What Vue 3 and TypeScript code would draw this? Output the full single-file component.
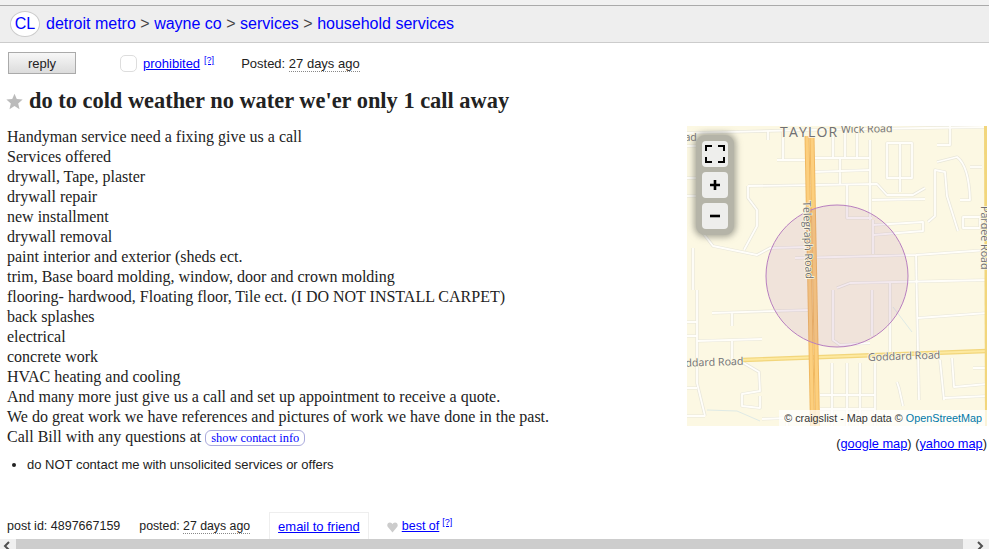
<template>
  <div class="page">
    <div class="top-strip"></div>
    <header class="crumbs">
      <a class="cl-logo" href="#">CL</a>
      <template v-for="(crumb, i) in crumbs" :key="crumb">
        <span v-if="i > 0" class="sep">&gt;</span>
        <a href="#">{{ crumb }}</a>
      </template>
    </header>

    <section class="actions">
      <button class="reply">reply</button>
      <span class="flag-box"></span>
      <a class="prohibited" href="#">prohibited</a>
      <sup class="help">[?]</sup>
      <span class="posted">Posted: <time>27 days ago</time></span>
    </section>

    <h1 class="title">
      <svg class="star" width="17" height="17" viewBox="0 0 24 24">
        <path fill="#bbb" d="M12 1l3.2 7.600 8.300.7-6.300 5.400 1.900 8.100-7.100-4.300-7.100 4.300 1.900-8.100L.5 9.300l8.300-.7z" />
      </svg>
      do to cold weather no water we'er only 1 call away
    </h1>

    <main class="content">
      <div class="body-col">
        <div class="body-text">
          <div v-for="line in bodyLines" :key="line">{{ line }}</div>
          <div>Call Bill with any questions at <a class="contact" href="#">show contact info</a></div>
        </div>
        <ul class="notices">
          <li>do NOT contact me with unsolicited services or offers</li>
        </ul>
      </div>

      <aside class="map-col">
        <div class="map">
          <svg width="300" height="300" viewBox="0 0 300 300">
            <rect width="300" height="300" fill="#fcf8e3" />
            <path d="M206 181L225 206M20 284L50 285L73 295" fill="none" stroke="#dfeae6" stroke-width="1" />
            <g fill="none" stroke-linejoin="round">
              <path v-for="s in streets" :key="'c' + s" :d="s" stroke="#e8e6da" stroke-width="3.2" />
              <path v-for="s in streets" :key="'f' + s" :d="s" stroke="#fffefa" stroke-width="1.8" />
              <!-- goddard and the road on the right edge -->
              <path d="M55 234L300 225" stroke="#f2d67c" stroke-width="4.4" />
              <path d="M55 234L300 225" stroke="#fde9a0" stroke-width="2.2" />
              <path d="M299 0L300 300" stroke="#f2d67c" stroke-width="4" />
              <!-- telegraph -->
              <path d="M120 10L125.500 300" stroke="#f0b860" stroke-width="5" />
              <path d="M125 10L130.500 300" stroke="#f0b860" stroke-width="5" />
              <path d="M120 10L125.500 300" stroke="#fccf7e" stroke-width="3" />
              <path d="M125 10L130.500 300" stroke="#fccf7e" stroke-width="3" />
            </g>
            <circle cx="150" cy="150" r="71" fill="#a0509f" fill-opacity="0.12" stroke="#b87fc0" stroke-width="1" />
            <g class="labels">
              <text x="93" y="11" class="town">TAYLOR</text>
              <text x="154" y="7" transform="rotate(-1 154 7)">Wick Road</text>
              <text x="-9" y="15">oad</text>
              <text x="116" y="75" transform="rotate(88 116 75)">Telegraph Road</text>
              <text x="294" y="80" transform="rotate(90 294 80)">Pardee Road</text>
              <text x="-8" y="241" transform="rotate(-2 -8 241)">oddard Road</text>
              <text x="181" y="235" transform="rotate(-2 181 235)">Goddard Road</text>
            </g>
          </svg>
          <div class="zoom-panel">
            <button class="zoom-btn">
              <svg width="20" height="18" viewBox="0 0 20 18">
                <path d="M1 6V1h6M13 1h6v5M19 12v5h-6M7 17H1v-5" fill="none" stroke="#000" stroke-width="2" />
              </svg>
            </button>
            <button class="zoom-btn">
              <svg width="10" height="10" viewBox="0 0 10 10"><path d="M5 0v10M0 5h10" stroke="#000" stroke-width="2.600" /></svg>
            </button>
            <button class="zoom-btn">
              <svg width="10" height="10" viewBox="0 0 10 10"><path d="M0 5h10" stroke="#000" stroke-width="2.600" /></svg>
            </button>
          </div>
          <div class="attribution">© craigslist - Map data © <a href="#">OpenStreetMap</a></div>
        </div>
        <div class="map-links">(<a href="#">google map</a>) (<a href="#">yahoo map</a>)</div>
      </aside>
    </main>

    <footer class="post-footer">
      <span class="post-id">post id: 4897667159</span>
      <span class="post-date">posted: <time>27 days ago</time></span>
      <a class="email" href="#">email to friend</a>
      <svg class="heart" width="11" height="11" viewBox="0 0 24 24">
        <path fill="#ccc" d="M12 23L2 11C-1 7 1 1 6.500 1 9 1 11 2.500 12 5c1-2.500 3-4 5.500-4C23 1 25 7 22 11z" />
      </svg>
      <a class="best" href="#">best of</a>
      <sup class="help">[?]</sup>
    </footer>

    <div class="scrollbar">
      <span class="arrow">
        <svg width="8" height="10" viewBox="0 0 8 10"><path d="M6 1L2 5l4 4" fill="none" stroke="#505050" stroke-width="2" /></svg>
      </span>
      <span class="thumb"></span>
      <span class="arrow right">
        <svg width="8" height="10" viewBox="0 0 8 10"><path d="M2 1l4 4-4 4" fill="none" stroke="#505050" stroke-width="2" /></svg>
      </span>
    </div>
  </div>
</template>

<script setup lang="ts">
const crumbs: string[] = ["detroit metro", "wayne co", "services", "household services"];

const bodyLines: string[] = [
  "Handyman service need a fixing give us a call",
  "Services offered",
  "drywall, Tape, plaster",
  "drywall repair",
  "new installment",
  "drywall removal",
  "paint interior and exterior (sheds ect.",
  "trim, Base board molding, window, door and crown molding",
  "flooring- hardwood, Floating floor, Tile ect. (I DO NOT INSTALL CARPET)",
  "back splashes",
  "electrical",
  "concrete work",
  "HVAC heating and cooling",
  "And many more just give us a call and set up appointment to receive a quote.",
  "We do great work we have references and pictures of work we have done in the past.",
];

// street centre lines, traced in map coordinates
const streets: string[] = [
  "M0 7L118 4L300 1",
  "M81 5V14",
  "M90 34H118M96 6V35",
  "M126 32H183M146 2V32M158 2V32M170 2V32",
  "M183 14V94",
  "M126 46L183 44M153 32V59",
  "M61 60L190 58L200 69H226L238 62",
  "M185 74L238 73",
  "M160 59V92H185",
  "M200 17H225V52H200ZM213 17V66",
  "M263 0V19H250",
  "M271 105L260 70L258 46L248 44V90L241 96",
  "M250 36L270 31Q282 40 283 74H273",
  "M283 41H295",
  "M276 91H293V102H276Z",
  "M61 60V72L70 84V100L57 124",
  "M16 107L26 120L70 129L83 122L120 121",
  "M108 132L229 129L300 124",
  "M186 94V128M186 109L236 105V96L186 99",
  "M229 129L232 274",
  "M6 122V164",
  "M0 20H16M0 52H16V107M0 70H16",
  "M150 162L163 157L300 154",
  "M146 164V214L153 219L183 217",
  "M185 164V210M203 157V227",
  "M25 187L123 184M45 187V200",
  "M10 164V257L18 290M0 196H10M0 210H10",
  "M10 215L75 213M45 215V234",
  "M145 237V300M160 237V300M173 237V300M188 237V300M133 269H188M133 283H188",
  "M231 192L300 187",
  "M253 234L257 274M265 232L267 261L300 258M257 272L300 270M286 242H300",
  "M55 236L72 246L73 265L55 268V280L73 282V270",
  "M210 256L212 262L216 280",
  "M75 293L100 292V300",
  "M0 262H10M0 290H18",
];
</script>

<style>
html,
body {
  margin: 0;
  overflow: hidden;
}
</style>

<style scoped>
.page {
  height: 549px;
  display: flex;
  flex-direction: column;
  overflow: hidden;
  background: #fff;
  color: #222;
  font-family: "Liberation Sans", Arial, sans-serif;
  font-size: 13px;
}

a {
  color: #00f;
}

.top-strip {
  height: 5px;
  background: #f1f1f1;
  border-bottom: 1px solid #aaa;
  flex: none;
}

.crumbs {
  flex: none;
  height: 37px;
  box-sizing: border-box;
  display: flex;
  align-items: center;
  gap: 4.500px;
  padding: 0 0 0 10px;
  background: #eee;
  border-bottom: 1px solid #ccc;
  font-size: 16px;
}

.crumbs a {
  text-decoration: none;
}

.crumbs .cl-logo {
  width: 28px;
  height: 24px;
  margin-right: 1.500px;
  border: 1px solid #ccc;
  border-radius: 50%;
  background: #fff;
  display: flex;
  align-items: center;
  justify-content: center;
}

.sep {
  color: #444;
}

.actions {
  flex: none;
  display: flex;
  align-items: center;
  height: 22px;
  margin: 9px 0 0 8px;
}

.reply {
  width: 68px;
  height: 22px;
  padding: 0;
  border: 1px solid #aaa;
  background: linear-gradient(#f7f7f7, #dcdcdc);
  color: #222;
  font: 13px "Liberation Sans", Arial, sans-serif;
}

.flag-box {
  width: 15px;
  height: 15px;
  margin-left: 44px;
  border: 1px solid #ddd;
  border-radius: 5px;
}

.prohibited {
  margin-left: 6px;
}

.help {
  font-size: 9px;
  margin-left: 4px;
  color: #00f;
  text-decoration: underline;
  align-self: flex-start;
  line-height: 16px;
}

.posted {
  margin-left: 27px;
}

time {
  border-bottom: 1px dotted #888;
}

.title {
  flex: none;
  margin: 14px 0 0 7px;
  display: flex;
  align-items: center;
  gap: 5px;
  height: 26px;
  color: #222;
  font: bold 22.400px "Liberation Serif", "Times New Roman", serif;
}

.star {
  margin-left: -1px;
  margin-right: 1px;
}

.content {
  flex: 1;
  display: flex;
  justify-content: space-between;
  padding: 12px 2px 0 7px;
  min-height: 0;
}

.body-text {
  margin-top: 1px;
  font: 16px/20px "Liberation Serif", "Times New Roman", serif;
}

.contact {
  padding: 0 5px;
  border: 1px solid #aad;
  border-radius: 6px;
  font-size: 12.400px;
  text-decoration: none;
}

.notices {
  margin: 9px 0 0;
  padding: 0 0 0 20px;
  font-size: 13px;
}

.map {
  position: relative;
  width: 300px;
  height: 300px;
  overflow: hidden;
}

.map > svg {
  display: block;
}

.labels text {
  fill: #6f6f74;
  font: 10.700px "Open Sans", sans-serif;
  paint-order: stroke;
  stroke: #fcf8e3;
  stroke-width: 1.500px;
}

.labels .town {
  font-size: 14px;
  letter-spacing: 1.200px;
}

.zoom-panel {
  position: absolute;
  left: 9px;
  top: 9px;
  padding: 6px;
  display: flex;
  flex-direction: column;
  gap: 5px;
  border-radius: 9px;
  background: #b5b4a8;
  box-shadow: 0 0 6px 2px rgba(130, 130, 120, 0.7);
}

.zoom-btn {
  width: 26px;
  height: 26px;
  padding: 0;
  border: 0;
  border-radius: 4px;
  background: #eeeeec;
  display: flex;
  align-items: center;
  justify-content: center;
}

.attribution {
  position: absolute;
  right: 0;
  bottom: 0;
  padding: 1px 5px;
  background: rgba(255, 255, 255, 0.7);
  color: #333;
  font-size: 10.800px;
  line-height: 14px;
}

.attribution a {
  color: #0078a8;
  text-decoration: none;
}

.map-links {
  margin-top: 10px;
  text-align: right;
  font-size: 12.800px;
}

.post-footer {
  flex: none;
  height: 27px;
  display: flex;
  align-items: center;
  padding-left: 7px;
  font-size: 12.500px;
}

.post-date {
  margin-left: 19px;
  font-size: 12.300px;
}

.email {
  margin-left: 19px;
  align-self: stretch;
  display: flex;
  align-items: center;
  padding: 0 8px;
  border: 1px solid #eee;
  border-bottom: 0;
  font-size: 13px;
}

.heart {
  margin: 4px 4px 0 18px;
}

.post-footer .help {
  margin-left: 3px;
  line-height: 20px;
}

.scrollbar {
  flex: none;
  height: 10px;
  display: flex;
  align-items: flex-start;
  background: #f0f0f0;
}

.arrow {
  width: 16px;
  height: 10px;
  padding-left: 3px;
  box-sizing: border-box;
  display: block;
}

.arrow.right {
  width: 26px;
  padding-left: 13px;
}

.thumb {
  flex: 1;
  height: 10px;
  background: #cdcdcd;
}
</style>
